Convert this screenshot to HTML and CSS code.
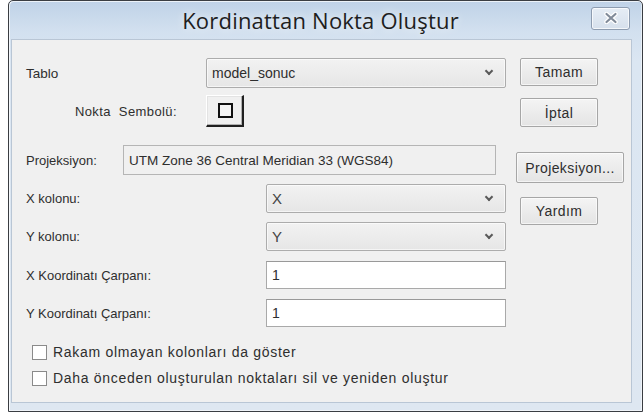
FILE: index.html
```html
<!DOCTYPE html>
<html lang="tr">
<head>
<meta charset="utf-8">
<title>Kordinattan Nokta Oluştur</title>
<link rel="stylesheet" href="styles.css">
</head>
<body>
<div class="window">
  <div class="titlebar">
    <span></span>
    <div class="title">Kordinattan Nokta Oluştur</div>
    <button class="close" aria-label="Kapat">
      <svg width="14" height="12" viewBox="0 0 14 12">
        <path d="M2.5 2 L11.5 10 M11.5 2 L2.5 10" stroke="#fff" stroke-width="4.4" stroke-linecap="round"/>
        <path d="M2.5 2 L11.5 10 M11.5 2 L2.5 10" stroke="#818b99" stroke-width="2.2" stroke-linecap="round"/>
      </svg>
    </button>
  </div>
  <div class="frame">
    <div class="client">
      <div class="form">
        <div class="row row-tablo">
          <label class="lbl lbl-tablo">Tablo</label>
          <div class="combo combo-tablo"><span>model_sonuc</span><i class="chev"></i></div>
        </div>
        <div class="row row-symbol">
          <label class="lbl lbl-symbol">Nokta&nbsp; Sembolü:</label>
          <button class="symbtn"><span class="sq"></span></button>
        </div>
        <div class="row row-proj">
          <label class="lbl lbl-proj">Projeksiyon:</label>
          <div class="field readonly">UTM Zone 36 Central Meridian 33 (WGS84)</div>
        </div>
        <div class="row row-x">
          <label class="lbl lbl-col">X kolonu:</label>
          <div class="combo combo-col"><span>X</span><i class="chev"></i></div>
        </div>
        <div class="row row-y">
          <label class="lbl lbl-col">Y kolonu:</label>
          <div class="combo combo-col"><span>Y</span><i class="chev"></i></div>
        </div>
        <div class="row row-xk">
          <label class="lbl lbl-col">X Koordinatı Çarpanı:</label>
          <div class="field edit">1</div>
        </div>
        <div class="row row-yk">
          <label class="lbl lbl-col">Y Koordinatı Çarpanı:</label>
          <div class="field edit">1</div>
        </div>
        <div class="row check check-1">
          <span class="box"></span><span>Rakam olmayan kolonları da göster</span>
        </div>
        <div class="row check check-2">
          <span class="box"></span><span>Daha önceden oluşturulan noktaları sil ve yeniden oluştur</span>
        </div>
      </div>
      <div class="actions">
        <button class="btn btn-ok">Tamam</button>
        <button class="btn btn-cancel">İptal</button>
        <button class="btn btn-proj">Projeksiyon...</button>
        <button class="btn btn-help">Yardım</button>
      </div>
    </div>
  </div>
</div>
</body>
</html>
```
FILE: styles.css
```css
* { box-sizing: border-box; }

html, body {
  margin: 0;
  padding: 0;
  background: #ffffff;
}

body {
  width: 644px;
  height: 414px;
  overflow: hidden;
  font-family: "Liberation Sans", Arial, sans-serif;
  font-size: 13px;
  color: #2e2e2e;
}

/* dialog window with aero-like frame */
.window {
  margin-left: 8px;
  width: 635px;
  height: 412px;
  border: 1px solid #3a3d42;
  border-radius: 5px 5px 0 0;
  background: linear-gradient(#bfd2e7 0px, #d2e0ef 30px, #dbe6f2 60px, #dee7f1 100%);
  display: flex;
  flex-direction: column;
  box-shadow: inset 1px 1px 0 rgba(255,255,255,0.7), inset -1px -1px 0 rgba(255,255,255,0.5);
}

.titlebar {
  height: 38px;
  display: grid;
  grid-template-columns: 1fr auto 1fr;
  align-items: center;
  padding-right: 12px;
}

.title {
  font-family: "Open Sans", "Noto Sans", sans-serif;
  font-size: 22px;
  color: #1e1e1e;
  letter-spacing: 0.2px;
  padding-left: 2px;
  text-shadow: 0 0 8px rgba(255,255,255,0.9);
}

.close {
  justify-self: end;
  width: 39px;
  height: 23px;
  margin-top: -4px;
  border: 1px solid #8d9cb0;
  border-radius: 3px;
  background: linear-gradient(#e6edf5, #d6e0ec);
  box-shadow: inset 0 0 0 1px rgba(255,255,255,0.7);
  display: flex;
  align-items: center;
  justify-content: center;
  padding: 0;
}

.frame {
  flex: 1;
  padding: 0 10px 8px 2px;
  display: flex;
}

.client {
  flex: 1;
  background: #f0f0f0;
  border: 1px solid #b9c6d5;
  display: flex;
  padding: 18px 0 0 14px;
}

/* left column of the form */
.form {
  width: 490px;
  display: flex;
  flex-direction: column;
}

.row {
  display: flex;
  align-items: center;
}

.lbl { flex: none; }
.lbl-tablo { width: 180px; font-size: 13.5px; }
.lbl-symbol { width: 180px; text-align: right; padding-right: 29px; letter-spacing: 0.4px; }
.lbl-proj { width: 97px; }
.lbl-col { width: 240px; }

.row-tablo { height: 30px; }
.row-symbol { height: 32px; margin-top: 7px; }
.row-proj { height: 30px; margin-top: 18px; }
.row-x { height: 29px; margin-top: 9px; }
.row-y { height: 29px; margin-top: 9px; }
.row-xk { height: 28px; margin-top: 10px; }
.row-yk { height: 28px; margin-top: 10px; }
.check-1 { height: 20px; margin-top: 15px; padding-left: 6px; }
.check-2 { height: 20px; margin-top: 6px; padding-left: 6px; }

.combo {
  height: 100%;
  border: 1px solid #acacac;
  border-radius: 2px;
  background: linear-gradient(#f2f2f2, #e6e6e6);
  display: flex;
  align-items: center;
  justify-content: space-between;
  padding: 0 13px 0 5px;
  box-shadow: inset 0 0 0 1px rgba(255,255,255,0.6);
}
.combo-tablo { width: 300px; font-size: 14px; }
.combo-col { width: 240px; }
.combo-col span { font-size: 15px; color: #444; }

.chev {
  width: 6px;
  height: 6px;
  border-right: 2px solid #5a5a5a;
  border-bottom: 2px solid #5a5a5a;
  transform: rotate(45deg);
  margin-top: -4px;
}

.field {
  height: 100%;
  border: 1px solid #abadb3;
  display: flex;
  align-items: center;
  padding: 0 5px;
}
.field.readonly {
  width: 373px;
  background: #f0f0f0;
  border-color: #b5b5b5;
  font-size: 13.5px;
}
.field.edit {
  width: 240px;
  background: #ffffff;
  border-color: #a9a9a9;
  border-top-color: #999;
  font-size: 14px;
}

/* classic raised button holding the point symbol */
.symbtn {
  width: 38px;
  height: 32px;
  padding: 0;
  background: #f0f0f0;
  border: none;
  border-top: 1px solid #ffffff;
  border-left: 1px solid #ffffff;
  border-right: 2px solid #202020;
  border-bottom: 2px solid #202020;
  box-shadow: inset -1px -1px 0 #b0b0b0, inset 1px 1px 0 #e3e3e3;
  display: flex;
  align-items: center;
  justify-content: center;
}
.sq {
  width: 15px;
  height: 15px;
  border: 2px solid #111;
  background: #f4f4f4;
  margin-left: 2px;
}

.check {
  gap: 6px;
  font-size: 14px;
  letter-spacing: 0.7px;
}
.box {
  width: 15px;
  height: 15px;
  border: 1px solid #8a8a8a;
  background: #ffffff;
  flex: none;
}

/* right column of command buttons */
.actions {
  display: flex;
  flex-direction: column;
  align-items: flex-start;
}

.btn {
  font-family: "Liberation Sans", Arial, sans-serif;
  font-size: 14px;
  letter-spacing: 0.4px;
  color: #2e2e2e;
  border: 1px solid #a6a6a6;
  border-radius: 2px;
  background: linear-gradient(#f4f4f4, #e4e4e4);
  box-shadow: inset 0 0 0 1px rgba(255,255,255,0.6);
  padding: 0;
}
.btn-ok { width: 78px; height: 28px; margin-left: 4px; }
.btn-cancel { width: 78px; height: 29px; margin-left: 4px; margin-top: 12px; }
.btn-proj { width: 108px; height: 31px; margin-top: 25px; }
.btn-help { width: 78px; height: 28px; margin-left: 4px; margin-top: 14px; }
```
